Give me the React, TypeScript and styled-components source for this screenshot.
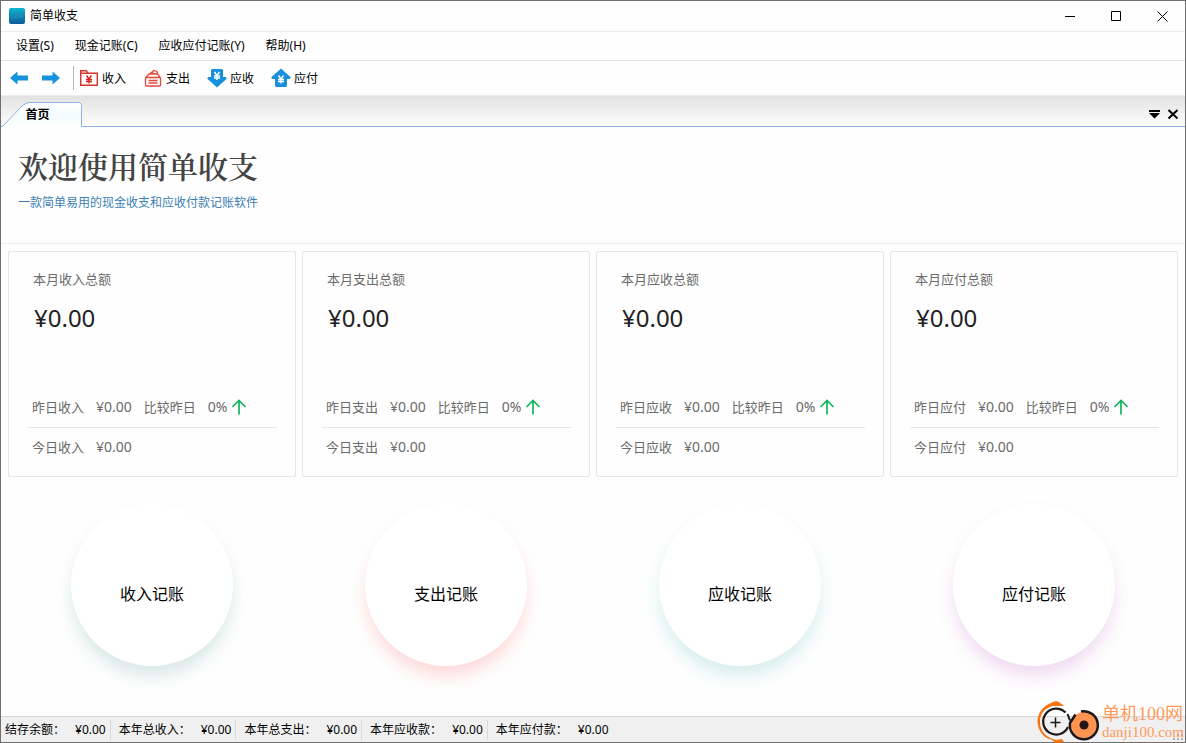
import React from "react";
import styled, { createGlobalStyle } from "styled-components";

const Global = createGlobalStyle`
  *, *::before, *::after { box-sizing: border-box; }
  body {
    margin: 0;
    background: #fefefe;
    color: #000;
    font: 12px/16px "Noto Sans", "Noto Sans CJK SC", sans-serif;
  }
  button {
    margin: 0;
    padding: 0;
    border: 0;
    background: none;
    color: inherit;
    font: inherit;
  }
  svg { display: block; flex: none; }
`;

const Window = styled.div`
  position: relative;
  display: flex;
  flex-direction: column;
  min-height: 100vh;
  border: 1px solid #6e6e70;
`;

const TitleBar = styled.header`
  display: flex;
  align-items: center;
  height: 31px;
  padding-left: 8px;
  border-bottom: 1px solid #ebebeb;
`;

const AppName = styled.h1`
  flex: 1;
  margin: 0 0 0 5px;
  font-size: 12px;
  font-weight: 400;
`;

const CaptionButton = styled.button`
  display: flex;
  align-items: center;
  justify-content: center;
  width: 46px;
  height: 30px;
`;

const MenuBar = styled.nav`
  display: flex;
  align-items: center;
  gap: 21px;
  height: 29px;
  padding: 0 15px;
  border-bottom: 1px solid #e3e3e3;
`;

const ToolBar = styled.div`
  display: flex;
  align-items: center;
  height: 35px;
  padding: 0 8px;
  border-bottom: 1px solid #ececec;
`;

const NavButton = styled.button`
  padding-right: 12px;
`;

const Separator = styled.span<{ $height: number; $color: string }>`
  width: 1px;
  height: ${(p) => p.$height}px;
  background: ${(p) => p.$color};
`;

const Tools = styled.div`
  display: flex;
  gap: 17px;
  margin-left: 5px;
`;

const ToolButton = styled.button`
  display: flex;
  align-items: center;
  gap: 3px;
`;

const ToolLabel = styled.span`
  padding-top: 2px;
`;

const TabStrip = styled.div`
  display: flex;
  align-items: flex-end;
  justify-content: space-between;
  height: 31px;
  border-bottom: 1px solid #8db2e3;
  background: linear-gradient(#e2e2e2, #fdfdfd);
`;

const Tab = styled.button`
  position: relative;
  width: 81px;
  height: 25px;
  margin-bottom: -1px;
  padding: 0 32px 0 24px;
  font-weight: 700;
  white-space: nowrap;

  svg {
    position: absolute;
    inset: 0;
    z-index: -1;
  }
`;

const TabLayer = styled.div`
  position: relative;
  z-index: 0;
`;

const StripActions = styled.div`
  display: flex;
  gap: 6px;
  padding: 0 6px 6px 0;
`;

const Welcome = styled.section`
  height: 117px;
  padding: 21px 17px 0;
  border-bottom: 1px solid #ececec;
`;

const Heading = styled.h2`
  margin: 0;
  color: #444;
  font: 600 30px/40px "Liberation Serif", "Noto Serif CJK SC", "Noto Sans CJK SC", serif;
`;

const Tagline = styled.p`
  margin: 7px 0 0;
  color: #3d7fb5;
`;

const Cards = styled.section`
  display: grid;
  grid-template-columns: repeat(4, 1fr);
  gap: 6px;
  padding: 7px 7px 0;
`;

const Card = styled.article`
  padding: 15px 18px 11px 19px;
  border: 1px solid #e6e6e6;
  border-radius: 2px;
  color: #6a6a6a;
  font-size: 13px;
`;

const CardTitle = styled.h3`
  margin: 0 0 10px 5px;
  font-size: 13px;
  font-weight: 400;
  line-height: 24px;
`;

const Total = styled.p`
  margin: 0 0 52px 6px;
  color: #222;
  font-size: 24px;
  line-height: 34px;
`;

const Row = styled.div`
  display: flex;
  align-items: center;
  gap: 12px;
  height: 40px;
  padding-left: 4px;
  white-space: nowrap;

  & + & {
    height: 38px;
    border-top: 1px solid #e6e6e6;
  }
`;

const Figure = styled.span`
  display: flex;
  align-items: center;
  gap: 3px;
  font-size: 14px;
`;

const Shortcuts = styled.section`
  display: grid;
  flex: 1;
  grid-template-columns: repeat(4, 1fr);
  gap: 6px;
  place-items: start center;
  padding: 27px 7px 50px;
`;

const RoundButton = styled.button<{ $glow: string }>`
  width: 162px;
  height: 162px;
  padding-top: 18px;
  border-radius: 50%;
  background: #fff;
  box-shadow: 0 11px 17px -2px ${(p) => p.$glow};
  font-size: 16px;
`;

const StatusBar = styled.footer`
  display: flex;
  align-items: center;
  height: 26px;
  padding-left: 4px;
  border-top: 1px solid #d7d7d7;
  background: #f0f0f0;
  white-space: nowrap;
`;

const StatusItem = styled.span`
  display: flex;
  gap: 10px;
  margin-right: 4px;
`;

const StatusCell = styled.div`
  display: flex;
  align-items: center;

  & + & { margin-left: 8px; }
`;

const SizeGrip = styled.span`
  display: flex;
  align-self: flex-end;
  margin-left: auto;
  padding: 0 2px 2px 0;
`;

const Watermark = styled.div`
  position: absolute;
  right: 1px;
  bottom: -1px;
  display: flex;
  align-items: center;
  gap: 2px;
  color: #ff9a5c;
  font-family: "Liberation Serif", "Noto Sans CJK SC", serif;
  white-space: nowrap;
`;

const SiteName = styled.div`
  font-size: 18px;
  line-height: 20px;
`;

const SiteUrl = styled.div`
  font-size: 15px;
  line-height: 16px;
`;

const AppIcon = () => (
  <svg width="16" height="16" viewBox="0 0 16 16">
    <defs>
      <linearGradient id="app" x1="0" y1="0" x2="0" y2="1">
        <stop offset="0" stopColor="#0fb5c9" />
        <stop offset="1" stopColor="#0c5a9b" />
      </linearGradient>
    </defs>
    <rect width="16" height="16" rx="2" fill="url(#app)" />
    <path d="M3 6h1M3 8v2h1M6 6h2v2H6v2h2M10 6v4M12 6v4M11 8h3" fill="none" stroke="#2d8db8" />
  </svg>
);

const Arrow = ({ flip = false }: { flip?: boolean }) => (
  <svg width="20" height="14" viewBox="0 0 20 14">
    <path
      d={flip ? "M19 7 11.500.5v4H1v5h10.500v4z" : "M1 7 8.500.5v4H19v5H8.500v4z"}
      fill="#1593dc"
    />
  </svg>
);

const Yen = ({ x, y, color }: { x: number; y: number; color: string }) => (
  <path
    transform={`translate(${x} ${y})`}
    d="M-2.500-4 0-.5 2.500-4M0-.5V4M-3 0h6M-3 2h6"
    fill="none"
    stroke={color}
    strokeWidth="1.400"
  />
);

const IncomeIcon = () => (
  <svg width="20" height="20" viewBox="0 0 20 20">
    <path
      d="M1.700 17.300V2.700h5.600l1.700 2.500h9.300v12.100zM1.700 5.200H9"
      fill="none"
      stroke="#d6332a"
      strokeWidth="1.400"
    />
    <Yen x={10} y={11.5} color="#d9231a" />
  </svg>
);

const ExpenseIcon = () => (
  <svg width="20" height="20" viewBox="0 0 20 20" fill="none" stroke="#e0483c" strokeWidth="1.300">
    <rect x="2.500" y="9.500" width="15" height="8.500" rx="1" />
    <path d="M5.500 12.500h9M5.500 15h9M2.800 9.500 6 6h8.500l2.700 3.500M6.500 6l4.500-3.500 3 1 .8 2.500M9 4.500l3 1.500" />
  </svg>
);

const BadgeIcon = ({ up = false }: { up?: boolean }) => (
  <svg width="20" height="20" viewBox="0 0 20 20">
    <path
      d={
        up
          ? "M10 .5 19.700 9.200 19 11h-3v7l-1 1H5l-1-1v-7H1L.3 9.200z"
          : "M10 19.500.3 10.800 1 9h3V2l1-1h10l1 1v7h3l.7 1.800z"
      }
      fill="#1890dc"
    />
    <Yen x={10} y={up ? 11.5 : 8} color="#fff" />
  </svg>
);

const UpArrow = () => (
  <svg width="16" height="16" viewBox="0 0 16 16">
    <path d="M8 15.500V1.500M1.500 8 8 1.500 14.500 8" fill="none" stroke="#12b35c" strokeWidth="1.700" />
  </svg>
);

const SiteLogo = () => (
  <svg width="67" height="42" viewBox="0 0 67 42" fill="none">
    <path
      d="M31 5 26 1Q23-.5 19 1.500C11 4 4 12 4.500 21S11 37 18 38.500L23 42l8-1-2-3-6 1C14 37 7 31 7 21S13 7 20 5z"
      fill="#f9730f"
    />
    <path d="M32.500 11.500A13 13 0 1 0 35 26" stroke="#1d1718" strokeWidth="2.200" />
    <path d="M22.500 16.500v10M17.500 21.500h10" stroke="#1d1718" strokeWidth="1.500" />
    <circle cx="51" cy="24" r="13" fill="#ff934f" />
    <path d="M48 10.500A14 14 0 1 1 37 22L42.500 13.500" stroke="#1d1718" strokeWidth="2.500" />
    <path d="M37 19.500 34.500 13" stroke="#1d1718" strokeWidth="2" />
    <circle cx="51" cy="24" r="4.500" fill="#241514" />
  </svg>
);

const menus = ["设置(S)", "现金记账(C)", "应收应付记账(Y)", "帮助(H)"];

const tools = [
  { label: "收入", icon: <IncomeIcon /> },
  { label: "支出", icon: <ExpenseIcon /> },
  { label: "应收", icon: <BadgeIcon /> },
  { label: "应付", icon: <BadgeIcon up /> },
];

const kinds = [
  { name: "收入", glow: "rgba(90, 160, 150, 0.24)" },
  { name: "支出", glow: "rgba(255, 90, 90, 0.24)" },
  { name: "应收", glow: "rgba(70, 175, 175, 0.22)" },
  { name: "应付", glow: "rgba(190, 90, 200, 0.23)" },
];

const yearly = ["结存余额：", "本年总收入：", "本年总支出：", "本年应收款：", "本年应付款："];

export default function App() {
  return (
    <Window>
      <Global />
      <TitleBar>
        <AppIcon />
        <AppName>简单收支</AppName>
        <CaptionButton aria-label="最小化">
          <svg width="10" height="10"><path d="M0 5.500h10" stroke="#000" /></svg>
        </CaptionButton>
        <CaptionButton aria-label="最大化">
          <svg width="10" height="10"><path d="M.5.5h9v9h-9z" fill="none" stroke="#000" /></svg>
        </CaptionButton>
        <CaptionButton aria-label="关闭">
          <svg width="11" height="11"><path d="M.5.5l10 10M10.500.5l-10 10" stroke="#000" /></svg>
        </CaptionButton>
      </TitleBar>

      <MenuBar>
        {menus.map((m) => <button key={m}>{m}</button>)}
      </MenuBar>

      <ToolBar>
        <NavButton aria-label="后退"><Arrow /></NavButton>
        <NavButton aria-label="前进"><Arrow flip /></NavButton>
        <Separator $height={24} $color="#b5b5b5" />
        <Tools>
          {tools.map((t) => (
            <ToolButton key={t.label}>
              {t.icon}
              <ToolLabel>{t.label}</ToolLabel>
            </ToolButton>
          ))}
        </Tools>
      </ToolBar>

      <TabStrip>
        <TabLayer>
          <Tab>
            <svg width="81" height="25" viewBox="0 0 81 25">
              <defs>
                <linearGradient id="tab" x1="0" y1="0" x2="0" y2="1">
                  <stop offset="0" stopColor="#fff" />
                  <stop offset="0.5" stopColor="#f2fbfb" />
                  <stop offset="1" stopColor="#fdffff" />
                </linearGradient>
              </defs>
              <path d="M0 24.500 2 24 21 4Q25 .5 29 .5H78.500L80.500 2.500V25H0z" fill="url(#tab)" />
              <path d="M0 24.500 2 24 21 4Q25 .5 29 .5H78.500L80.500 2.500V25" fill="none" stroke="#8db2e3" />
            </svg>
            首页
          </Tab>
        </TabLayer>
        <StripActions>
          <button aria-label="标签列表">
            <svg width="12" height="11"><path d="M0 1h11v2H0zM0 4h11L5.500 9.500z" /></svg>
          </button>
          <button aria-label="关闭标签">
            <svg width="12" height="11"><path d="M1.500 1l9 8.500M10.500 1l-9 8.500" stroke="#000" strokeWidth="2" /></svg>
          </button>
        </StripActions>
      </TabStrip>

      <Welcome>
        <Heading>欢迎使用简单收支</Heading>
        <Tagline>一款简单易用的现金收支和应收付款记账软件</Tagline>
      </Welcome>

      <Cards>
        {kinds.map(({ name }) => (
          <Card key={name}>
            <CardTitle>本月{name}总额</CardTitle>
            <Total>¥0.00</Total>
            <Row>
              <span>昨日{name}</span>
              <Figure>¥0.00</Figure>
              <span>比较昨日</span>
              <Figure>0% <UpArrow /></Figure>
            </Row>
            <Row>
              <span>今日{name}</span>
              <Figure>¥0.00</Figure>
            </Row>
          </Card>
        ))}
      </Cards>

      <Shortcuts>
        {kinds.map(({ name, glow }) => (
          <RoundButton key={name} $glow={glow}>{name}记账</RoundButton>
        ))}
      </Shortcuts>

      <StatusBar>
        {yearly.map((label, i) => (
          <StatusCell key={label}>
            <StatusItem><span>{label}</span><span>¥0.00</span></StatusItem>
            {i < yearly.length - 1 && <Separator $height={20} $color="#d9d9d9" />}
          </StatusCell>
        ))}
        <SizeGrip>
          <svg width="10" height="10">
            <path d="M8 0h2v2H8zM4 4h2v2H4zM8 4h2v2H8zM0 8h2v2H0zM4 8h2v2H4zM8 8h2v2H8z" fill="#b0b0b0" />
          </svg>
        </SizeGrip>
      </StatusBar>

      <Watermark>
        <SiteLogo />
        <div>
          <SiteName>单机100网</SiteName>
          <SiteUrl>danji100.com</SiteUrl>
        </div>
      </Watermark>
    </Window>
  );
}
